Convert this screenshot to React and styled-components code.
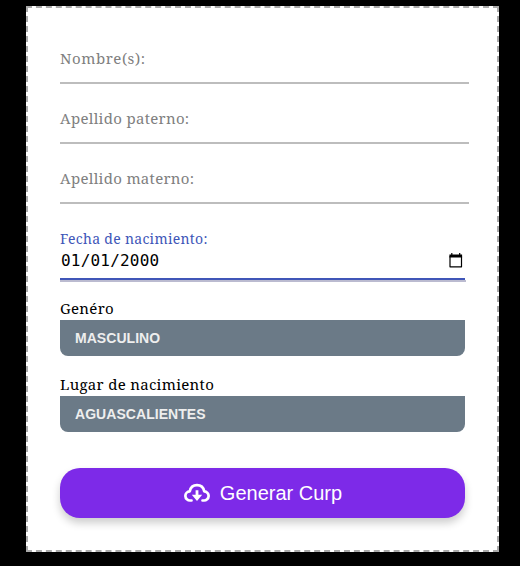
import React from "react";
import styled, { createGlobalStyle } from "styled-components";

const GlobalStyle = createGlobalStyle`
  * { box-sizing: border-box; }
  body {
    margin: 0;
    background: #000;
    font-family: "Noto Serif", "DejaVu Serif", serif;
  }
`;

const Page = styled.main`
  height: 566px;
  padding: 6px 21px 14px 26px;
  overflow: hidden;
`;

const Card = styled.form`
  height: 546px;
  padding: 40px 32px 0;
  border: 2px dashed #aaa;
  background: #fff;
`;

const Field = styled.div`
  width: 409px;
  height: 36px;
  margin-bottom: 24px;
  border-bottom: 2px solid #bdbdbd;
`;

const Label = styled.label`
  display: block;
  width: max-content;
  padding-bottom: ${(p) => (p.$small ? 0 : 2)}px;
  font-size: ${(p) => (p.$small ? 14 : 15)}px;
  line-height: ${(p) => (p.$small ? 22 : 20)}px;
  letter-spacing: ${(p) => p.$spacing || 0.3}px;
  color: ${(p) => p.$color || "#808080"};
  white-space: nowrap;
`;

const DateField = styled.div`
  width: 406px;
  height: 54px;
  margin-bottom: 16px;
  border-bottom: 2px solid #bbbbd0;
`;

const DateRow = styled.div`
  display: flex;
  align-items: center;
  justify-content: space-between;
  width: 405px;
  height: 30px;
  padding: 0 2px 7px 1px;
  border-bottom: 2px solid #4056b8;
  font: 16px/20px "DejaVu Sans Mono", monospace;
  letter-spacing: 0.2px;
  color: #000;
`;

const Group = styled.div`
  height: 58px;
  margin-bottom: 18px;
`;

const Select = styled.div`
  display: flex;
  align-items: center;
  width: 405px;
  height: 36px;
  padding-left: 15px;
  border-radius: 0 0 8px 8px;
  background: #6b7a87;
  color: #eee;
  font: bold 14px "Liberation Sans", sans-serif;
  letter-spacing: 0.05px;
`;

const Submit = styled.button`
  display: flex;
  align-items: center;
  justify-content: center;
  gap: 10px;
  width: 405px;
  height: 50px;
  margin-top: 36px;
  padding: 0 0 0 1px;
  border: 0;
  border-radius: 20px;
  background: #7d2ae8;
  box-shadow: 0 5px 8px rgba(0, 0, 0, 0.2);
  color: #fff;
  font: 20px "Liberation Sans", sans-serif;
`;

const CalendarIcon = () => (
  <svg width="14" height="15" viewBox="0 0 14 15" fill="none">
    <path d="M1 3.5h11.5v10.3H1z" stroke="#000" strokeWidth="1.2" strokeLinejoin="round" />
    <path d="M.4 1.5h12.7v3H.4zM2.2 0h1.2v2H2.2zM10.1 0h1.2v2h-1.2z" fill="#000" />
  </svg>
);

const CloudIcon = () => (
  <svg width="26" height="20" viewBox="0 0 26 20" fill="none">
    <path
      d="M7.5 17.5H6.2A4.6 4.6 0 0 1 5.8 8.3C6.5 4.6 9.4 2.2 13 2.2s6.5 2.4 7.2 6.1A4.6 4.6 0 0 1 19.8 17.5H18.5"
      stroke="#fff"
      strokeWidth="2.7"
      strokeLinecap="round"
      strokeLinejoin="round"
    />
    <path d="M11.6 7.2h2.8v4.6h3.8L13 18l-5.2-6.2h3.8z" fill="#fff" />
  </svg>
);

export default function App() {
  return (
    <>
      <GlobalStyle />
      <Page>
        <Card>
          <Field><Label $spacing={0.55}>Nombre(s):</Label></Field>
          <Field><Label>Apellido paterno:</Label></Field>
          <Field><Label>Apellido materno:</Label></Field>
          <DateField>
            <Label $color="#4056b8" $small>Fecha de nacimiento:</Label>
            <DateRow><span>01/01/2000</span><CalendarIcon /></DateRow>
          </DateField>
          <Group>
            <Label $color="#000">Genéro</Label>
            <Select>MASCULINO</Select>
          </Group>
          <Group>
            <Label $color="#000">Lugar de nacimiento</Label>
            <Select>AGUASCALIENTES</Select>
          </Group>
          <Submit type="button"><CloudIcon />Generar Curp</Submit>
        </Card>
      </Page>
    </>
  );
}
